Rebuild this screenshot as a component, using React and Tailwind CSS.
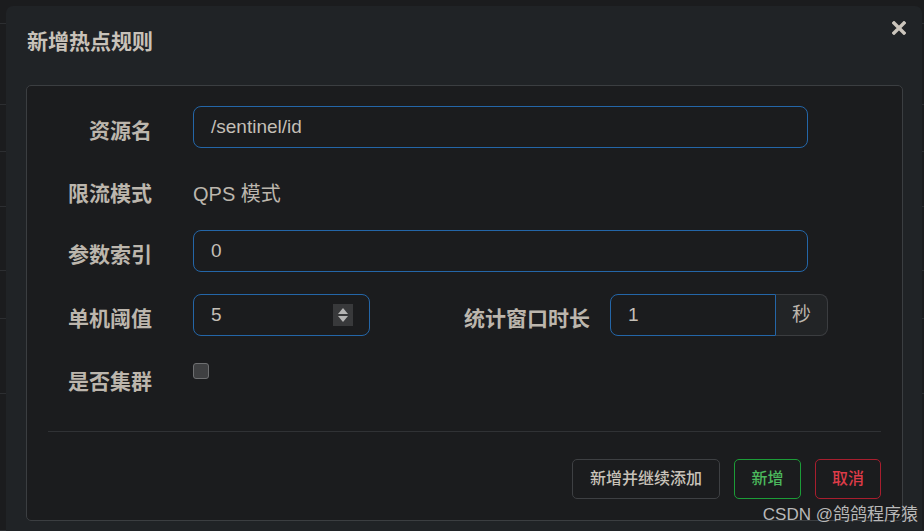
import React from "react";

const FONT = { fontFamily: '"Liberation Sans", "Noto Sans CJK SC", sans-serif' };

function Label({ children, className = "" }) {
  return (
    <div className={"text-[21px] font-bold text-[#bcb6ad] leading-[28px] " + className}>
      {children}
    </div>
  );
}

function Spinner() {
  return (
    <div className="w-[20px] h-[22px] bg-[#38393b] flex flex-col items-center justify-center gap-[2px]">
      <svg width="10" height="6" viewBox="0 0 10 6"><path d="M5 0 L10 6 L0 6 Z" fill="#b4b4b4" /></svg>
      <svg width="10" height="6" viewBox="0 0 10 6"><path d="M0 0 L10 0 L5 6 Z" fill="#b4b4b4" /></svg>
    </div>
  );
}

export default function App() {
  const bgRows = [24, 81, 47, 55, 64, 48, 75, 137];
  return (
    <div className="relative w-[924px] h-[531px] overflow-hidden bg-[#1b1c1e]" style={FONT}>
      {/* page behind the dialog */}
      <div className="flex flex-col">
        {bgRows.map((h, i) => (
          <div key={i} className="border-b border-[#2c2e31]" style={{ height: h }} />
        ))}
      </div>

      {/* dialog */}
      <div className="absolute left-[6px] top-[6px] w-[916px] h-[540px] bg-[#202326] rounded-t-[7px] flex flex-col">
        <div className="h-[79px] flex items-start justify-between pl-[21px] pr-[16px]">
          <div className="mt-[22px] text-[21px] font-bold text-[#c8c2b9] leading-[28px]">新增热点规则</div>
          <svg className="mt-[15px]" width="14" height="14" viewBox="0 0 14 14">
            <path d="M2 2 L12 12 M12 2 L2 12" stroke="#cbc5bc" strokeWidth="3.4" strokeLinecap="square" />
          </svg>
        </div>

        <div className="ml-[20px] w-[877px] h-[436px] border border-[#3b3e41] rounded-[5px] bg-[#1b1c1e] flex flex-col">
          {/* row 1 */}
          <div className="mt-[20px] h-[42px] flex items-center">
            <Label className="w-[125px] text-right pt-[8px]">资源名</Label>
            <div className="ml-[41px] w-[615px] h-[42px] border border-[#2466a8] rounded-[8px] flex items-center pl-[17px] text-[19px] text-[#c4bfb7]">
              /sentinel/id
            </div>
          </div>
          {/* row 2 */}
          <div className="mt-[25px] h-[42px] flex items-center">
            <Label className="w-[125px] text-right">限流模式</Label>
            <div className="ml-[41px] text-[20px] text-[#bcb6ad]">QPS 模式</div>
          </div>
          {/* row 3 */}
          <div className="mt-[15px] h-[42px] flex items-center">
            <Label className="w-[125px] text-right pt-[8px]">参数索引</Label>
            <div className="ml-[41px] w-[615px] h-[42px] border border-[#2466a8] rounded-[8px] flex items-center pl-[17px] text-[19px] text-[#c4bfb7]">
              0
            </div>
          </div>
          {/* row 4 */}
          <div className="mt-[22px] h-[42px] flex items-center">
            <Label className="w-[125px] text-right pt-[8px]">单机阈值</Label>
            <div className="ml-[41px] w-[177px] h-[42px] border border-[#2466a8] rounded-[8px] flex items-center justify-between pl-[17px] pr-[16px] text-[19px] text-[#c4bfb7]">
              <span>5</span>
              <Spinner />
            </div>
            <Label className="w-[220px] text-right pt-[8px]">统计窗口时长</Label>
            <div className="ml-[20px] flex h-[42px]">
              <div className="w-[166px] h-[42px] border border-[#2466a8] rounded-l-[8px] flex items-center pl-[17px] text-[19px] text-[#c4bfb7]">
                1
              </div>
              <div className="w-[52px] h-[42px] border border-l-0 border-[#3b3d40] bg-[#222426] rounded-r-[8px] flex items-center justify-center text-[19px] text-[#bcb6ad]">
                秒
              </div>
            </div>
          </div>
          {/* row 5 */}
          <div className="mt-[22px] h-[42px] flex items-start">
            <Label className="w-[125px] text-right mt-[10px]">是否集群</Label>
            <div className="ml-[41px] mt-[5px] w-[16px] h-[16px] bg-[#3f4042] border border-[#6e6f71] rounded-[3px]" />
          </div>

          <div className="mt-[31px] mx-[21px] border-t border-[#303235]" />

          <div className="mt-[27px] mr-[21px] flex justify-end gap-[14px]">
            <div className="w-[148px] h-[40px] border border-[#3e4043] rounded-[5px] flex items-center justify-center text-[16px] font-medium text-[#c8c2b9]">
              新增并继续添加
            </div>
            <div className="w-[67px] h-[40px] border border-[#1c9c38] rounded-[5px] flex items-center justify-center text-[16px] font-medium text-[#4cb95d]">
              新增
            </div>
            <div className="w-[66px] h-[40px] border border-[#a81e2e] rounded-[5px] flex items-center justify-center text-[16px] font-medium text-[#dc3b48]">
              取消
            </div>
          </div>
        </div>
      </div>

      <div className="absolute right-[6px] bottom-[5px] text-[17px] text-[#b8b8b8] leading-[22px]">
        CSDN @鸽鸽程序猿
      </div>
    </div>
  );
}
